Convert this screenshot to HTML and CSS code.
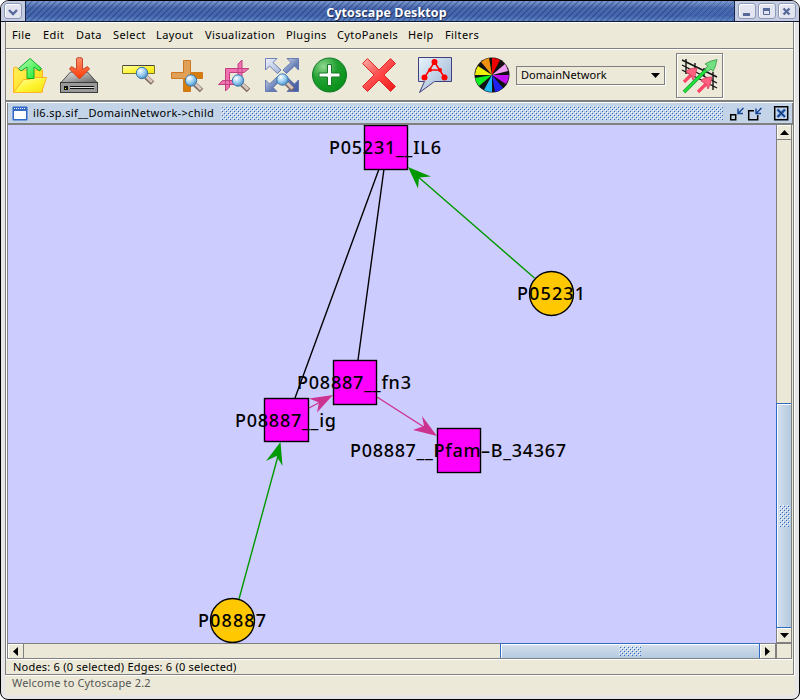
FILE: index.html
```html
<!DOCTYPE html>
<html lang="en">
<head>
<meta charset="utf-8">
<title>Cytoscape Desktop</title>
<link rel="stylesheet" href="styles.css">
</head>
<body>
<svg class="defs" width="0" height="0" aria-hidden="true">
  <defs>
    <linearGradient id="yellow" x1="0" y1="0" x2="1" y2="1"><stop offset="0" stop-color="#ffffb0"/><stop offset=".55" stop-color="#fff430"/><stop offset="1" stop-color="#f0e010"/></linearGradient>
    <linearGradient id="back" x1="0" y1="0" x2="1" y2="1"><stop offset="0" stop-color="#fff060"/><stop offset="1" stop-color="#ffd800"/></linearGradient>
    <linearGradient id="green" x1="0" y1="0" x2="1" y2="1"><stop offset="0" stop-color="#b8ffb8"/><stop offset="1" stop-color="#10e820"/></linearGradient>
    <linearGradient id="red" x1="0" y1="0" x2="1" y2="1"><stop offset="0" stop-color="#ffb0a8"/><stop offset=".5" stop-color="#ff4848"/><stop offset="1" stop-color="#f01818"/></linearGradient>
    <linearGradient id="orange" x1="0" y1="0" x2="0" y2="1"><stop offset="0" stop-color="#ff9070"/><stop offset="1" stop-color="#ff3800"/></linearGradient>
    <linearGradient id="steel" x1="0" y1="0" x2="1" y2="1"><stop offset="0" stop-color="#e8e8e8"/><stop offset="1" stop-color="#606060"/></linearGradient>
    <linearGradient id="blue" gradientUnits="userSpaceOnUse" x1="265" y1="58" x2="299" y2="92"><stop offset="0" stop-color="#f0f2ff"/><stop offset=".35" stop-color="#b8c4e0"/><stop offset=".55" stop-color="#6880b8"/><stop offset="1" stop-color="#4058a0"/></linearGradient>
    <linearGradient id="note" x1="0" y1="0" x2="1" y2="1"><stop offset="0" stop-color="#e8f4fc"/><stop offset="1" stop-color="#98b0d0"/></linearGradient>
    <radialGradient id="ball" cx=".32" cy=".25" r=".8"><stop offset="0" stop-color="#90d890"/><stop offset=".5" stop-color="#20a030"/><stop offset="1" stop-color="#089018"/></radialGradient>
    <radialGradient id="lens" cx=".35" cy=".3" r=".8"><stop offset="0" stop-color="#fff"/><stop offset=".55" stop-color="#90c8f0"/><stop offset="1" stop-color="#4080b0"/></radialGradient>
    <pattern id="bumps" width="4" height="4" patternUnits="userSpaceOnUse"><path fill="#fff" d="M0 0h1v1H0zM2 2h1v1H2z"/><path fill="#3169c6" d="M1 1h1v1H1zM3 3h1v1H3z"/></pattern>
    <g id="magnifier"><path d="M4 4l6.500 6" stroke="#806860" stroke-width="5"/><path d="M4 3l6 6" stroke="#d8c8c0" stroke-width="3"/><circle r="5.700" fill="url(#lens)" stroke="#3878b0"/></g>
  </defs>
</svg>
<div class="window">
  <header class="titlebar">
    <div class="controls left"><span class="wbtn"><svg width="14" height="14"><path d="M3 5l4 4 4-4" fill="none" stroke="#566a9b" stroke-width="2.400"/></svg></span></div>
    <div class="caption">Cytoscape Desktop</div>
    <div class="controls right">
      <span class="wbtn"><svg width="14" height="14"><path d="M3 8h7v3H3z" fill="#566a9b"/></svg></span>
      <span class="wbtn"><svg width="14" height="14"><path d="M3.500 4v5.500h6V4" fill="none" stroke="#566a9b"/><path d="M3 3h7v3H3z" fill="#566a9b"/></svg></span>
      <span class="wbtn"><svg width="14" height="14"><path d="M3.500 3.500l6 6m0-6l-6 6" stroke="#566a9b" stroke-width="2.400"/></svg></span>
    </div>
  </header>
  <div class="body">
    <nav class="menubar">
      <span class="m-file">File</span><span class="m-edit">Edit</span><span class="m-data">Data</span><span class="m-select">Select</span><span class="m-layout">Layout</span><span class="m-vis">Visualization</span><span class="m-plug">Plugins</span><span class="m-panels">CytoPanels</span><span class="m-help">Help</span><span>Filters</span>
    </nav>
    <div class="toolbar">
      <svg class="tools" width="510" height="50" viewBox="5 50 510 50">
        <path d="M13.500 92V68l3-1 2 3h24v22z" fill="url(#back)" stroke="#ffb020"/>
        <path d="M13.500 92.500l10-13h6l3-2h14l-5 15z" fill="url(#yellow)" stroke="#ffb428"/>
        <path d="M30 58.500l11.500 10-2 2.500-5.500-4v11.500h-7V67l-6 4-2.500-2.500z" fill="url(#green)" stroke="#18a828"/>
        <path d="M60.500 83l10-11h17l10 11z" fill="url(#steel)" stroke="#505050"/>
        <rect x="60.500" y="82.500" width="37" height="10" fill="#999" stroke="#3c3c3c"/>
        <path d="M64 86h4v4h-4zM70 86h24v1H70zM70 88h24v1H70z" fill="#111"/><path d="M70 87h24v1H70z" fill="#ddd"/><path d="M65 88h1v1h-1z" fill="#ff0"/>
        <path d="M79.500 79l-10-10 2-2.500 5 3V59q0-1.500 3-1.500t3 1.500v10.500l5-3 2 2.500z" fill="url(#orange)" stroke="#c84828"/>
        <path d="M122.500 65.500h32v8h-32z" fill="url(#yellow)" stroke="#777830"/><path d="M123 65.500h31" stroke="#444"/>
        <use href="#magnifier" x="142" y="73"/>
        <path d="M183.500 60.500h7v12h12v6h-12v13h-7v-13h-12v-6h12z" fill="#e0a058" stroke="#d07820"/><path d="M184 91v-13h6V73h12v5h-12v13z" fill="#d87c08"/>
        <use href="#magnifier" x="191" y="80.500"/>
        <path d="M225.500 91V68.500H249l-5 4h-14.500V87zM218.500 84.500l4-4h15.500V64l4-4v24.500z" fill="#f070b0" stroke="#c04080"/>
        <use href="#magnifier" x="238" y="80.500"/>
        <g fill="url(#blue)" stroke="#5468a8" stroke-width=".8">
          <path d="M265.500 58.500H277l-4 4 8 7.500-3.500 3.500-8-7.500-4 4zM298.500 58.500H287l4 4-8 7.500 3.500 3.500 8-7.500 4 4zM265.500 91.500H277l-4-4 8-7.500-3.500-3.500-8 7.500-4-4zM298.500 91.500H287l4-4-8-7.500 3.500-3.500 8 7.500 4-4z"/>
        </g>
        <use href="#magnifier" x="282.500" y="79.500"/>
        <circle cx="329.500" cy="75" r="17" fill="url(#ball)" stroke="#107828"/>
        <path d="M327.500 64.500h4V73h8.500v4h-8.500v8.500h-4V77H319v-4h8.500z" fill="#fff" stroke="#187828"/>
        <path d="M367.500 58.500L379 70l11.500-11.500 5 5L384 75l11.500 11.500-5 5L379 80l-11.500 11.500-5-5L374 75l-11.500-11.500z" fill="url(#red)" stroke="#e02828"/>
        <path d="M418.500 57.500h33v24h-17l-15 11 5-11h-6z" fill="url(#note)" stroke="#404080"/>
        <path d="M434.500 62l-10 15.500M434.500 62l10 15.500M430 70h10" fill="none" stroke="#f00" stroke-width="1.500"/>
        <g fill="#f00"><circle cx="434.500" cy="62" r="3"/><circle cx="424.500" cy="77.500" r="3"/><circle cx="444.500" cy="77.500" r="3"/><circle cx="430" cy="70" r="2"/><circle cx="440" cy="70" r="2"/></g>
        <circle cx="492" cy="75" r="17.500" fill="#111"/>
        <g>
          <path fill="#e00" d="M492 75V58a17 17 0 0 1 8 2z"/><path fill="#f0a0f0" d="M492 75l13-11a17 17 0 0 1 3 7z"/><path fill="#c010f0" d="M492 75h17a17 17 0 0 1-3 9z"/><path fill="#2020f0" d="M492 75l11 13a17 17 0 0 1-8 4z"/><path fill="#20b8f8" d="M492 75v17a17 17 0 0 1-8-2z"/><path fill="#10f020" d="M492 75l-13 11a17 17 0 0 1-4-8z"/><path fill="#f0f010" d="M492 75h-17a17 17 0 0 1 3-9z"/><path fill="#f09010" d="M492 75l-11-13a17 17 0 0 1 8-4z"/>
        </g>
      </svg>
      <div class="combo"><span>DomainNetwork</span><svg width="9" height="5"><path d="M0 0h9L4.500 5z"/></svg></div>
      <div class="filter"><svg width="44" height="43" viewBox="677 53 44 43">
        <path d="M682 59l35 17M682 64l35 18M682 69l35 18M686 58v15M695 62v8M704 67v8M713 71v18" stroke="#111" stroke-width="1.400"/>
        <path d="M684 91l24-24" stroke="#189030" stroke-width="3.600"/><path d="M684 91l24-24" stroke="#20e838" stroke-width="2.200"/>
        <path d="M705 63q4-3 12-4.500-1 7-4 12l-2-2.500-4 3-2-3 3-3z" fill="#70e080" stroke="#389848" stroke-width=".8"/>
        <path d="M684 81l10-10M698 91l10-10" stroke="#ff4868" stroke-width="3.200"/>
        <path d="M686 71q2-4 11-4-1 7-4 12l-2-5-2-1zM701 80q2-4 11-4-1 7-4 12l-2-5-2-1z" fill="#ff6080" stroke="#d04060" stroke-width=".8"/>
      </svg></div>
    </div>
    <section class="frame">
      <div class="frametitle">
        <svg width="16" height="15"><rect x=".5" y=".5" width="15" height="14" rx="1" fill="#3169c6"/><path d="M2 5h12v8H2z" fill="#fff"/><path d="M2 2.500h12" stroke="#fff" stroke-dasharray="1 1"/></svg>
        <span class="fname">il6.sp.sif__DomainNetwork-&gt;child</span>
        <svg class="bumps" width="502" height="14"><rect width="502" height="14" fill="url(#bumps)"/></svg>
        <svg width="64" height="16" viewBox="726 105 64 16">
          <g fill="none" stroke="#000" stroke-width="1.500">
            <path d="M730.700 114.700h5v5h-5z"/><path d="M743.500 108l-5 5M738 108.500v5h5" stroke="#184898"/>
            <path d="M754 110.700h-5.300v9h9V115"/><path d="M761.500 108l-5 5M756 108.500v5h5" stroke="#184898"/>
            <path d="M774.700 106.700h13v13h-13z"/><path d="M777.500 109.500l7.500 7.500m0-7.500l-7.500 7.500" stroke="#3169c6" stroke-width="2.600"/><path d="M777.500 109.500l7.500 7.500m0-7.500l-7.500 7.500" stroke="#123" stroke-width=".8"/>
          </g>
        </svg>
      </div>
      <div class="pane">
        <svg class="network" width="768" height="518" viewBox="8 125 768 518">
          <g stroke="#000" stroke-width="1.400"><path d="M379 169L295 398M384 169L358 360"/></g>
          <g stroke="#009900" stroke-width="1.400"><path d="M534.500 278L416 175M239 599l39-143"/></g>
          <g stroke="#cc3390" stroke-width="1.400"><path d="M309 408l17-9M377 397l50 32"/></g>
          <g fill="#009900"><path d="M408 167l23 9.500-12 1-1 11zM280.500 442l2 24-6-10-10.500 5z"/></g>
          <g fill="#cc3390"><path d="M333 395l-24 3.500 10 4-2 10zM437 436l-24-6 11-4-2-10z"/></g>
          <g fill="#f0f" stroke="#000" stroke-width="1.400"><rect x="364.500" y="125.500" width="43" height="44"/><rect x="333.500" y="360.500" width="43" height="44"/><rect x="264.500" y="398.500" width="44" height="43"/><rect x="437.500" y="428.500" width="43" height="44"/></g>
          <g fill="#ffc800" stroke="#000" stroke-width="1.400"><circle cx="551.500" cy="293.500" r="22"/><circle cx="232.500" cy="620.500" r="22"/></g>
          <g class="labels"><text x="329" y="154" textLength="112">P05231__IL6</text><text x="517" y="300" textLength="68">P05231</text><text x="297" y="389" textLength="114">P08887__fn3</text><text x="235" y="427" textLength="101">P08887__ig</text><text x="350" y="457" textLength="216">P08887__Pfam–B_34367</text><text x="198" y="627" textLength="68">P08887</text></g>
        </svg>
        <div class="vbar"><span class="sbtn"><svg width="9" height="5"><path d="M0 5h9L4.500 0z"/></svg></span><span class="vtrack"></span><span class="vthumb"><svg width="11" height="22"><rect width="11" height="22" fill="url(#bumps)"/></svg></span><span class="sbtn"><svg width="9" height="5"><path d="M0 0h9L4.500 5z"/></svg></span></div>
        <div class="hbar"><span class="sbtn"><svg width="5" height="9"><path d="M5 0v9L0 4.500z"/></svg></span><span class="htrack"></span><span class="hthumb"><svg width="22" height="10"><rect width="22" height="10" fill="url(#bumps)"/></svg></span><span class="sbtn"><svg width="5" height="9"><path d="M0 0v9l5-4.500z"/></svg></span></div>
        <div class="corner"></div>
      </div>
    </section>
    <div class="status">Nodes: 6 (0 selected) Edges: 6 (0 selected)</div>
  </div>
  <footer class="welcome">Welcome to Cytoscape 2.2</footer>
</div>
</body>
</html>
```

FILE: styles.css
```css
* { box-sizing: border-box; }
body { margin: 0; background: #fff; font: 11px/14px "Noto Sans", "DejaVu Sans", sans-serif; color: #000; letter-spacing: .4px; }
svg { display: block; flex: none; }
.defs { position: absolute; }
.window { width: 800px; height: 700px; border: 1px solid #000; border-radius: 9px 9px 8px 8px; background: #e6e6e6; overflow: hidden; display: flex; flex-direction: column; padding: 0 4px 4px 4px; }
.titlebar { height: 21px; flex: none; margin: 0 -4px; display: flex; border-bottom: 1px solid #101830; }
.controls { background: #c4cbe0; display: flex; padding: 2px 3px; gap: 2px; }
.controls.left { width: 25px; border-right: 1px solid #182850; }
.controls.right { width: 65px; border-left: 1px solid #182850; }
.wbtn { width: 18px; height: 16px; border: 1px solid #8c98b8; border-radius: 3px; background: #e2e5f0; box-shadow: inset 1px 1px #fff; padding: 1px 1px; }
.caption { flex: 1; text-align: center; color: #fff; font: bold 12.5px/23px "Open Sans", sans-serif; letter-spacing: .1px; padding-left: 13px; text-shadow: 1px 1px 1px #182850; background: repeating-linear-gradient(135deg, rgba(20,35,90,.32) 0 1px, transparent 1px 4.240px), linear-gradient(#7b9ad0, #4868ac 35%, #4466b0 75%, #6088c4); }
.body { width: 789px; height: 653px; flex: none; background: #ece9d8; border-left: 1px solid #808080; border-right: 1px solid #808080; box-shadow: 1px 0 #fff; display: flex; flex-direction: column; }
.menubar { height: 27px; flex: none; border-top: 1px solid #fff; border-bottom: 1px solid #808080; display: flex; padding: 5px 0 0 6px; }
.menubar span { white-space: nowrap; }
.m-file { width: 31px; } .m-edit { width: 33px; } .m-data { width: 37px; } .m-select { width: 43px; } .m-layout { width: 49px; } .m-vis { width: 81px; } .m-plug { width: 51px; } .m-panels { width: 71px; } .m-help { width: 37px; }
.toolbar { height: 53px; flex: none; border-top: 1px solid #fff; border-bottom: 2px solid #808080; display: flex; align-items: center; }
.tools { margin-left: -1px; }
.combo { width: 149px; height: 19px; margin-left: 1px; border: 1px solid #808080; box-shadow: 1px 1px #fff; display: flex; align-items: center; justify-content: space-between; padding: 0 4px; letter-spacing: .05px; }
.filter { width: 47px; height: 45px; margin-left: 11px; border: 1px solid #808080; box-shadow: inset 1px 1px #fff, 1px 1px #fff; }
.frame { height: 557px; border-left: 1px solid #fff; border-top: 1px solid #fff; flex: none; }
.frametitle { height: 22px; width: 786px; background: #c3d4e8; border-left: 1px solid #808080; border-right: 1px solid #808080; border-bottom: 2px solid #808080; display: flex; align-items: center; padding-left: 4px; }
.fname { width: 193px; padding-left: 5px; white-space: nowrap; letter-spacing: .32px; }
.bumps { margin-right: 3px; }
.pane { display: grid; grid-template: 518px 16px / 768px 16px; width: 785px; border-left: 1px solid #808080; }
.network { background: #ccccff; }
.labels { font-size: 18px; letter-spacing: 0; font-weight: 500; }
.vbar { display: flex; flex-direction: column; border-left: 1px solid #808080; border-right: 1px solid #808080; background: #ebe8d7; }
.hbar { display: flex; border-top: 1px solid #808080; border-bottom: 1px solid #808080; background: #ebe8d7; }
.sbtn { width: 15px; height: 15px; flex: none; background: #ece9d8; box-shadow: inset 1px 1px #fff; border: 1px solid #808080; border-width: 0 1px 1px 0; display: flex; align-items: center; justify-content: center; }
.vbar .sbtn { width: 14px; border-right: 0; }
.hbar .sbtn { width: 16px; height: 14px; border-bottom: 0; }
.vtrack { height: 263px; flex: none; } .htrack { width: 476px; flex: none; }
.vthumb { flex: 1; margin-left: -1px; border: 1px solid #3169c6; border-right: 0; background: linear-gradient(90deg, #d4e0ec, #b4cae0); box-shadow: inset 1px 1px #fff; display: flex; align-items: center; justify-content: center; }
.hthumb { flex: 1; margin-top: -1px; border: 1px solid #3169c6; border-bottom: 0; background: linear-gradient(#d4e0ec, #b4cae0); box-shadow: inset 1px 1px #fff; display: flex; align-items: center; justify-content: center; }
.corner { background: #ece9d8; border: 1px solid #808080; }
.status { flex: 1; border-top: 1px solid #fff; border-bottom: 1px solid #808080; line-height: 14px; padding-left: 7px; letter-spacing: .22px; }
.welcome { flex: 1; background: #ece9d8; border-top: 1px solid #fff; color: #555; padding: 0 0 0 7px; letter-spacing: .15px; }
```
